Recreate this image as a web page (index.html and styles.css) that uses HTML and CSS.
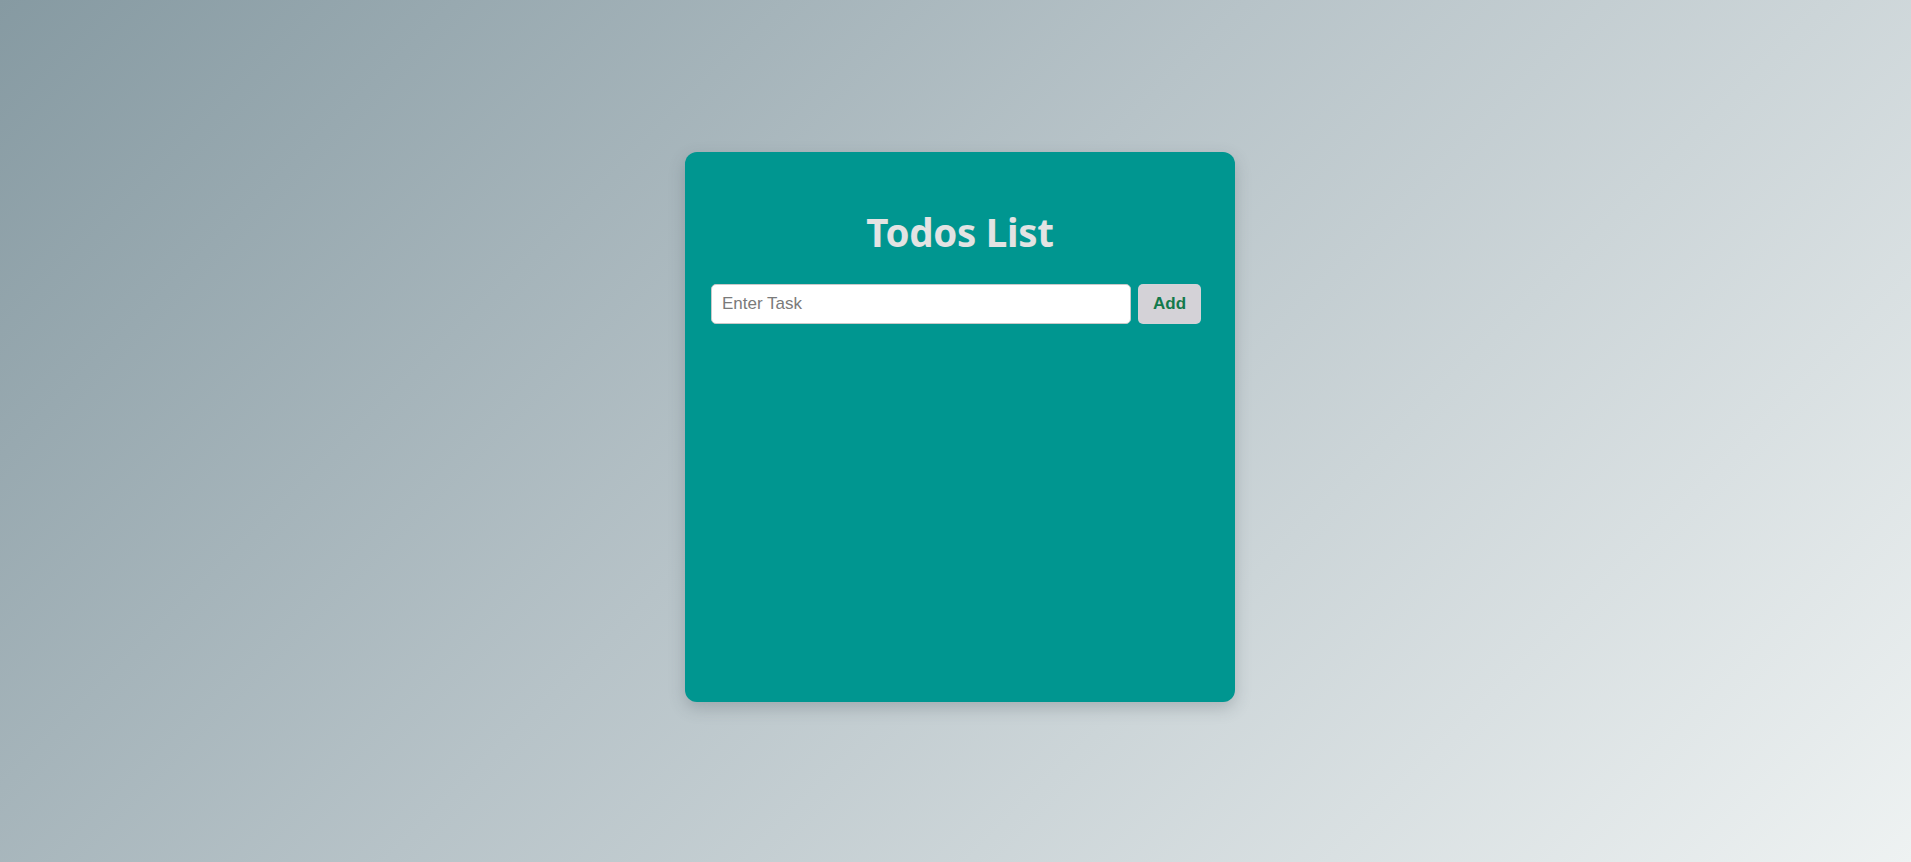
FILE: index.html
```html
<!DOCTYPE html>
<html lang="en">
<head>
<meta charset="UTF-8">
<title>Todos List</title>
<link rel="stylesheet" href="styles.css">
</head>
<body>
<main class="page">
  <section class="card">
    <h1 class="title">Todos List</h1>
    <form class="task-form" onsubmit="return false">
      <input class="task-input" type="text" placeholder="Enter Task">
      <button class="add-btn" type="submit">Add</button>
    </form>
    <ul class="task-list"></ul>
  </section>
</main>
</body>
</html>
```

FILE: styles.css
```css
* { box-sizing: border-box; }
html, body { margin: 0; padding: 0; }
body {
  min-height: 100vh;
  background: linear-gradient(135deg, #869aa2 0%, #b7c3c8 45%, #eef2f2 100%);
  font-family: "Liberation Sans", Arial, sans-serif;
}
.page {
  min-height: 100vh;
  display: flex;
  justify-content: center;
  align-items: flex-start;
  padding: 152px 0 0 9px;
}
.card {
  width: 550px;
  height: 550px;
  background: #009690;
  border-radius: 12px;
  box-shadow: 0 6px 16px rgba(60, 70, 80, 0.25);
  padding: 54px 34px 25px 26px;
  display: flex;
  flex-direction: column;
}
.title {
  margin: 0 0 26px;
  text-align: center;
  color: #e3e3e3;
  font-family: "Noto Sans", "Open Sans", sans-serif;
  font-weight: 700;
  font-size: 38.5px;
  line-height: 52px;
  letter-spacing: -0.3px;
  padding-left: 8px;
}
.task-form {
  display: flex;
  gap: 7px;
  margin: 0;
}
.task-input {
  width: 420px;
  height: 40px;
  border: 1px solid #c9c9c9;
  border-radius: 5px;
  padding: 0 10px;
  font-family: "Liberation Sans", Arial, sans-serif;
  font-size: 17px;
  color: #333;
  background: #fff;
  outline: none;
}
.task-input::placeholder { color: #7a7a7a; }
.add-btn {
  width: 63px;
  height: 40px;
  border: none;
  border-radius: 5px;
  background: #d4d2d7;
  color: #137a4c;
  font-family: "Liberation Sans", Arial, sans-serif;
  font-weight: 700;
  font-size: 17px;
  cursor: pointer;
}
.task-list {
  list-style: none;
  margin: 0;
  padding: 0;
}
```
